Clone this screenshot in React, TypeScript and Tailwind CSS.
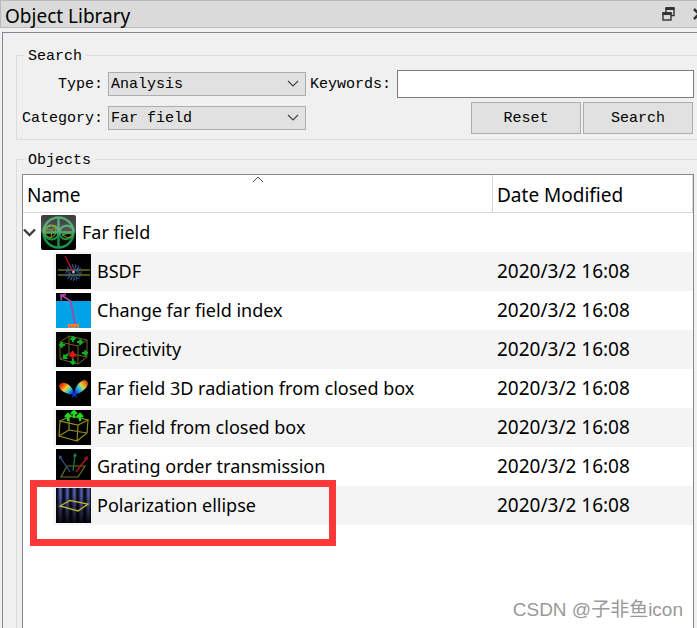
import type { ReactNode } from "react";

const iconClass = "block h-[35px] w-[35px] shrink-0";

function FarFieldIcon() {
  return (
    <svg className={iconClass} viewBox="0 0 35 35" fill="none">
      <defs>
        <linearGradient id="gloss" x1="0" y1="0" x2="0" y2="1">
          <stop offset="0" stopColor="#3c3c3c" />
          <stop offset="0.46" stopColor="#555" />
          <stop offset="0.54" stopColor="#0c0c0c" />
          <stop offset="1" stopColor="#000" />
        </linearGradient>
        <linearGradient id="ring" x1="0" y1="0" x2="0" y2="35" gradientUnits="userSpaceOnUse">
          <stop offset="0" stopColor="#4fa576" />
          <stop offset="0.45" stopColor="#5db384" />
          <stop offset="0.6" stopColor="#139447" />
          <stop offset="1" stopColor="#17964b" />
        </linearGradient>
      </defs>
      <rect width="35" height="35" rx="2" fill="url(#gloss)" />
      <g stroke="url(#ring)" strokeWidth="2.4">
        <circle cx="17.5" cy="17.5" r="15" />
        <path d="M17.5 2.5V33M3 17.5H32" />
        <circle cx="10.5" cy="17.5" r="7" strokeWidth="2" />
        <path d="M31 13C27 9 19 10 18.5 17.5C19 25 27 26 31 21" strokeWidth="2" />
      </g>
      <g stroke="#8d9c22">
        <path d="M4 14L8 10L15 11L14 20L10 23L5 21ZM4 14L11 15L15 11M11 15L10 23" />
        <path d="M21 20L28 18L32 20L27 23Z" />
      </g>
    </svg>
  );
}

function BsdfIcon() {
  return (
    <svg className={iconClass} viewBox="0 0 35 35" fill="none">
      <rect width="35" height="35" fill="#000" />
      <path d="M2 16H34M2 21H34" stroke="#716e1b" strokeWidth="1.6" />
      <circle cx="17.5" cy="18.5" r="5" stroke="#3562a4" strokeWidth="5" strokeDasharray="1 1.2" />
      <circle cx="17.5" cy="18.5" r="8" stroke="#294f86" strokeWidth="1.4" strokeDasharray="1 2" />
      <path d="M9 2L17 18" stroke="#b51222" strokeWidth="1.4" />
      <circle cx="17.5" cy="18" r="1.5" fill="#b9a4b1" />
    </svg>
  );
}

function IndexIcon() {
  return (
    <svg className={iconClass} viewBox="0 0 35 35" fill="none">
      <rect width="35" height="35" fill="#00a2e8" />
      <rect width="35" height="8" fill="#000" />
      <path d="M19 31L14.5 8L5 2M5.5 7.5L5 2L10 1.5" stroke="#a349a4" strokeWidth="1.8" />
      <path d="M13 35V32H22V35M15 34.5H20" stroke="#ff7f27" strokeWidth="2" />
    </svg>
  );
}

function DirectivityIcon() {
  return (
    <svg className={iconClass} viewBox="0 0 35 35" fill="none">
      <rect width="35" height="35" fill="#000" />
      <path
        d="M4 10L13 4L31 8L22 14ZM4 10V27L22 32V14M22 32L31 25V8M13 4V21L31 25M13 21L4 27"
        stroke="#6b6522"
      />
      <path
        d="M17 10V5M14.5 7.5L17 5L19.5 7.5M9 13H4M6.5 10.5L4 13L6.5 15.5M21 10H26M23.5 7.5L26 10L23.5 12.5M12 22L8 26M8 22.5V26H11.5M26 21H31M28.5 18.5L31 21L28.5 23.5M17 27V32M14.5 29.5L17 32L19.5 29.5"
        stroke="#08b51e"
        strokeWidth="1.9"
      />
      <path d="M16.5 27V22M14 23.5L16.5 20L19 23.5Z" stroke="#e5121c" strokeWidth="2" fill="#e5121c" />
    </svg>
  );
}

function RadiationIcon() {
  return (
    <svg className={iconClass} viewBox="0 0 35 35">
      <defs>
        <linearGradient id="lobeLeft" x1="0" y1="0" x2="1" y2="0.8">
          <stop offset="0" stopColor="#a91208" />
          <stop offset="0.28" stopColor="#fa4e0b" />
          <stop offset="0.5" stopColor="#f5d22c" />
          <stop offset="0.72" stopColor="#31c5ce" />
          <stop offset="1" stopColor="#0723c6" />
        </linearGradient>
        <linearGradient id="lobeRight" x1="1" y1="0" x2="0" y2="0.9">
          <stop offset="0" stopColor="#9c1a0b" />
          <stop offset="0.25" stopColor="#f48218" />
          <stop offset="0.45" stopColor="#bfe04e" />
          <stop offset="0.65" stopColor="#26b5e4" />
          <stop offset="1" stopColor="#0723c6" />
        </linearGradient>
      </defs>
      <rect width="35" height="35" fill="#000" />
      <path d="M18 24C10 23 4 20 3 15C4 10 11 11 15 16C17 19 18 21 18 24Z" fill="url(#lobeLeft)" />
      <path d="M18 24C18 18 22 11 28 9C33 9 33 14 29 18C26 21 22 23 18 24Z" fill="url(#lobeRight)" />
      <path d="M16 20L18 23L21 19L20 24L21 27L18.5 25L16 27L17 23Z" fill="#0b36e0" />
    </svg>
  );
}

function ClosedBoxIcon() {
  return (
    <svg className={iconClass} viewBox="0 0 35 35" fill="none">
      <rect width="35" height="35" fill="#000" />
      <path
        d="M4 11L15 6L32 10L22 15ZM4 11L3 26L21 31L22 15M21 31L31 23L32 10M13 7V20L31 23M13 20L3 26"
        stroke="#918b20"
        strokeWidth="1.2"
      />
      <path
        d="M12 11V5M9 7L12 4L15 7M18 8V2M15 4L18 1L21 4M24 11V5M21 7L24 4L27 7"
        stroke="#1edb21"
        strokeWidth="2.4"
      />
    </svg>
  );
}

function GratingIcon() {
  return (
    <svg className={iconClass} viewBox="0 0 35 35" fill="none">
      <rect width="35" height="35" fill="#000" />
      <path d="M11 17H29L22 28H5Z" stroke="#747019" strokeWidth="1.2" />
      <path d="M14 23L4 8M3.5 10V7L6 8.5" stroke="#315891" strokeWidth="1.2" />
      <path d="M17 22L19 6M17.5 7.5L19 5L20.5 7.5" stroke="#12804d" strokeWidth="1.2" />
      <path d="M20 23L30 10M28 9.5L31 8V11" stroke="#b11823" strokeWidth="1.3" />
    </svg>
  );
}

function PolarizationIcon() {
  return (
    <svg className={iconClass} viewBox="0 0 35 35" fill="none">
      <defs>
        <linearGradient id="stripe" x1="0" x2="7" y1="0" y2="0" gradientUnits="userSpaceOnUse" spreadMethod="repeat">
          <stop offset="0" stopColor="#05050c" />
          <stop offset="0.25" stopColor="#11142e" />
          <stop offset="0.6" stopColor="#5863ad" />
          <stop offset="0.8" stopColor="#3b4480" />
          <stop offset="1" stopColor="#05050c" />
        </linearGradient>
        <linearGradient id="fade" x1="0" y1="0" x2="0" y2="1">
          <stop offset="0.2" stopColor="#000" stopOpacity="0" />
          <stop offset="1" stopColor="#000" stopOpacity="0.9" />
        </linearGradient>
      </defs>
      <rect width="35" height="35" fill="url(#stripe)" />
      <rect width="35" height="35" fill="url(#fade)" />
      <path d="M4 18L14 12.5L32 16L22 23Z" stroke="#b8b13a" strokeWidth="1.4" />
    </svg>
  );
}

const objects = [
  { name: "BSDF", icon: <BsdfIcon /> },
  { name: "Change far field index", icon: <IndexIcon /> },
  { name: "Directivity", icon: <DirectivityIcon /> },
  { name: "Far field 3D radiation from closed box", icon: <RadiationIcon /> },
  { name: "Far field from closed box", icon: <ClosedBoxIcon /> },
  { name: "Grating order transmission", icon: <GratingIcon /> },
  { name: "Polarization ellipse", icon: <PolarizationIcon />, marked: true },
];

function Dropdown({ id, value }: { id: string; value: string }) {
  return (
    <div className="relative">
      <select
        id={id}
        className="block h-6 w-full appearance-none border border-[#adadad] bg-[#e1e1e1] pt-0.5 pl-[2px] leading-5"
      >
        <option>{value}</option>
      </select>
      <svg className="pointer-events-none absolute top-2 right-[7px] h-2 w-3" viewBox="0 0 12 8" fill="none">
        <path d="M1 1L6 6L11 1" stroke="#444" strokeWidth="1.2" />
      </svg>
    </div>
  );
}

// Group box: the title sits on the top border and hides the line behind it
function Group({ title, className, children }: { title: string; className: string; children: ReactNode }) {
  return (
    <section className={`flex flex-col border-t border-l border-[#dcdcdc] pr-[3px] pl-[5px] ${className}`}>
      <h2 className="-mt-[9px] mb-[3px] ml-[2px] w-fit bg-[#f0f0f0] px-1 leading-5">{title}</h2>
      {children}
    </section>
  );
}

function App() {
  const button = "h-8 w-[110px] border border-[#adadad] bg-[#e1e1e1] pt-0.5";
  const headCell = "h-[38px] border-r border-b border-[#d5d5d5] pt-1 pb-0 pl-1 font-normal";

  return (
    <div className="relative flex min-h-screen flex-col overflow-hidden bg-[#f0f0f0] font-['Noto_Sans','Noto_Sans_CJK_SC',sans-serif] text-lg text-black">
      <header className="flex h-7 items-center justify-between border-y border-l border-[#b9b9b9] bg-[#dadada] pl-1">
        <h1 className="pt-1 text-[19px] leading-6">Object Library</h1>
        <div className="-mr-2 flex items-center gap-[18px]">
          <button aria-label="Float">
            <svg className="h-[14px] w-[13px]" viewBox="0 0 13 14" fill="none" stroke="#333">
              <path d="M4 5V1.5H12V8.5H9" strokeWidth="1.4" />
              <path d="M3.5 1.5H12.5" strokeWidth="3" />
              <rect x="1" y="6" width="8" height="7" strokeWidth="1.4" fill="#dadada" />
              <path d="M0.5 6.5H9.5" strokeWidth="3" />
            </svg>
          </button>
          <button aria-label="Close">
            <svg className="h-3 w-3" viewBox="0 0 12 12" fill="none" stroke="#333" strokeWidth="2.6">
              <path d="M1 1L11 11M11 1L1 11" />
            </svg>
          </button>
        </div>
      </header>

      <main className="mt-1 ml-[2px] flex flex-1 flex-col gap-[19px] border-t border-l border-[#828790] pt-[22px] pl-[13px] font-['Liberation_Mono',monospace] text-[15px]">
        <Group title="Search" className="border-b pb-[5px]">
          <div className="grid grid-cols-[auto_198px_1fr] items-center gap-y-1">
            <label htmlFor="type" className="pt-0.5 pr-[5px] text-right">
              Type:
            </label>
            <Dropdown id="type" value="Analysis" />
            <div className="flex items-center gap-[6px] pl-1">
              <label htmlFor="keywords" className="pt-0.5">
                Keywords:
              </label>
              <input id="keywords" className="h-7 min-w-0 flex-1 border border-[#7a7a7a] bg-white px-1" />
            </div>
            <label htmlFor="category" className="pt-0.5 pr-[5px] text-right">
              Category:
            </label>
            <Dropdown id="category" value="Far field" />
            <div className="flex justify-end gap-[2px] pr-px">
              <button className={button}>Reset</button>
              <button className={button}>Search</button>
            </div>
          </div>
        </Group>

        <Group title="Objects" className="flex-1">
          <div className="flex-1 border border-b-0 border-[#828790] bg-white font-['Noto_Sans','Noto_Sans_CJK_SC',sans-serif] text-lg">
            <table className="w-full table-fixed border-separate border-spacing-0 text-left">
              <thead className="text-[19px]">
                <tr>
                  <th className={`relative ${headCell}`}>
                    Name
                    <svg className="absolute inset-x-0 top-px mx-auto h-[7px] w-3" viewBox="0 0 12 7" fill="none">
                      <path d="M1 6L6 1L11 6" stroke="#555" />
                    </svg>
                  </th>
                  <th className={`w-[200px] ${headCell}`}>Date Modified</th>
                </tr>
              </thead>
              <tbody>
                <tr className="h-[39px]">
                  <td className="p-0" colSpan={2}>
                    <div className="flex items-center">
                      <svg className="h-[9px] w-[13px]" viewBox="0 0 13 9" fill="none">
                        <path d="M1 1.5L6.5 7L12 1.5" stroke="#404040" strokeWidth="2.4" />
                      </svg>
                      <span className="mr-[6px] ml-[5px]">
                        <FarFieldIcon />
                      </span>
                      <span className="pb-0.5">Far field</span>
                    </div>
                  </td>
                </tr>
                {objects.map((item, i) => {
                  const shade = i % 2 === 0 ? "bg-[#f4f4f4]" : "bg-white";
                  return (
                    <tr key={item.name} className="h-[39px]">
                      <td className="p-0 pl-[30px]">
                        <div className={`relative flex h-[39px] items-center gap-[6px] pl-[3px] ${shade}`}>
                          {item.icon}
                          <span className="pb-0.5">{item.name}</span>
                          {item.marked && (
                            <div className="pointer-events-none absolute -top-[6px] -left-[23px] z-10 h-[66px] w-[306px] border-7 border-[#fc3838]" />
                          )}
                        </div>
                      </td>
                      <td className={`p-0 pl-1 text-[19px] ${shade}`}>2020/3/2 16:08</td>
                    </tr>
                  );
                })}
              </tbody>
            </table>
          </div>
        </Group>
      </main>

      <p className="absolute right-[14px] bottom-[6px] font-['Liberation_Sans','Noto_Sans_CJK_SC',sans-serif] text-[19px] leading-6 text-[#999]">
        CSDN @子非鱼icon
      </p>
    </div>
  );
}

export default App;
